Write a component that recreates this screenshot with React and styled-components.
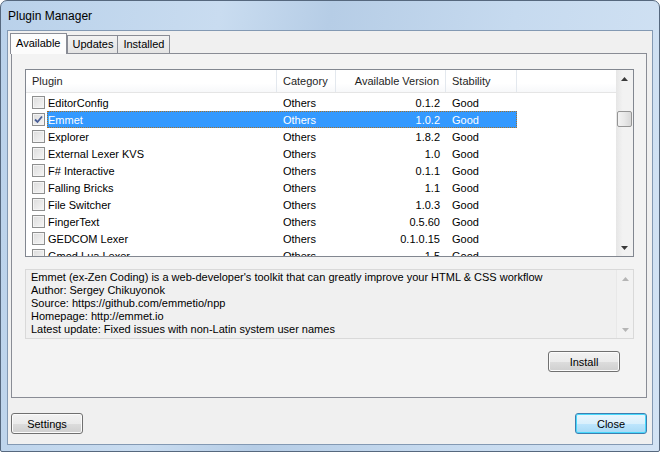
import React from 'react';
import styled, { createGlobalStyle, css } from 'styled-components';

const GlobalStyle = createGlobalStyle`
  html, body {
    margin: 0;
    padding: 0;
    width: 660px;
    height: 452px;
    overflow: hidden;
    background: #ffffff;
  }
  * {
    box-sizing: border-box;
  }
`;

const plugins = [
  { name: 'EditorConfig', version: '0.1.2' },
  { name: 'Emmet', version: '1.0.2', checked: true, selected: true },
  { name: 'Explorer', version: '1.8.2' },
  { name: 'External Lexer KVS', version: '1.0' },
  { name: 'F# Interactive', version: '0.1.1' },
  { name: 'Falling Bricks', version: '1.1' },
  { name: 'File Switcher', version: '1.0.3' },
  { name: 'FingerText', version: '0.5.60' },
  { name: 'GEDCOM Lexer', version: '0.1.0.15' },
  { name: 'Gmod Lua Lexer', version: '1.5' },
];

const description = [
  "Emmet (ex-Zen Coding) is a web-developer's toolkit that can greatly improve your HTML & CSS workflow",
  'Author: Sergey Chikuyonok',
  'Source: https://github.com/emmetio/npp',
  'Homepage: http://emmet.io',
  'Latest update: Fixed issues with non-Latin system user names',
];

const Arrow = ({ up, disabled }) => (
  <svg width="7" height="4" viewBox="0 0 7 4">
    <path
      d={up ? 'M0 4 L3.5 0 L7 4 Z' : 'M0 0 L3.5 4 L7 0 Z'}
      fill={disabled ? '#b5b5b5' : '#3a3a3a'}
    />
  </svg>
);

const CheckMark = () => (
  <svg width="9" height="9" viewBox="0 0 9 9">
    <path d="M1 4.5 L3.5 7 L8 1.5" fill="none" stroke="#4a5f97" strokeWidth="1.8" />
  </svg>
);

const App = () => {
  return (
    <>
      <GlobalStyle />
      <Window>
        <TitleBar>Plugin Manager</TitleBar>
        <Client>
          <TabStrip>
            <Tab active pad={6}>Available</Tab>
            <Tab pad={4}>Updates</Tab>
            <Tab pad={5}>Installed</Tab>
          </TabStrip>
          <TabPanel>
            <ListBox>
              <ListMain>
                <Header>
                  <HeaderCell>Plugin</HeaderCell>
                  <HeaderCell>Category</HeaderCell>
                  <HeaderCell right>Available Version</HeaderCell>
                  <HeaderCell>Stability</HeaderCell>
                  <HeaderCell />
                </Header>
                <Rows>
                  {plugins.map((p) => (
                    <Row key={p.name}>
                      <CheckCell>
                        <CheckBox>{p.checked && <CheckMark />}</CheckBox>
                      </CheckCell>
                      <Cells selected={p.selected}>
                        <Cell>{p.name}</Cell>
                        <Cell>Others</Cell>
                        <Cell right>{p.version}</Cell>
                        <Cell>Good</Cell>
                      </Cells>
                    </Row>
                  ))}
                </Rows>
              </ListMain>
              <ScrollBar>
                <ArrowBox>
                  <Arrow up />
                </ArrowBox>
                <Track>
                  <Thumb />
                </Track>
                <ArrowBox>
                  <Arrow />
                </ArrowBox>
              </ScrollBar>
            </ListBox>

            <DescBox>
              <DescText>
                {description.map((line) => (
                  <div key={line}>{line}</div>
                ))}
              </DescText>
              <DescScroll>
                <ArrowBox>
                  <Arrow up disabled />
                </ArrowBox>
                <ArrowBox>
                  <Arrow disabled />
                </ArrowBox>
              </DescScroll>
            </DescBox>

            <InstallRow>
              <Button>Install</Button>
            </InstallRow>
          </TabPanel>

          <BottomBar>
            <Button>Settings</Button>
            <Button primary>Close</Button>
          </BottomBar>
        </Client>
      </Window>
    </>
  );
};

export default App;

const Window = styled.div`
  width: 660px;
  height: 452px;
  display: flex;
  flex-direction: column;
  padding: 0 6px 6px 6px;
  border: 1px solid #56687e;
  border-radius: 7px 7px 2px 2px;
  background: linear-gradient(
    100deg,
    #b9d1ea 0%,
    #c9dcf0 30%,
    #b6cde6 45%,
    #c6daef 70%,
    #d3e3f4 100%
  );
  font-family: 'Liberation Sans', Arial, sans-serif;
  font-size: 11px;
  color: #000;
`;

const TitleBar = styled.div`
  height: 29px;
  display: flex;
  align-items: center;
  padding-left: 1px;
  padding-top: 1px;
  font-size: 12px;
  color: #000;
`;

const Client = styled.div`
  flex: 1;
  display: flex;
  flex-direction: column;
  background: #f0f0f0;
  border: 1px solid #8399b3;
  padding: 2px 5px 0 2px;
`;

const TabStrip = styled.div`
  display: flex;
  align-items: flex-end;
  height: 20px;
  flex-shrink: 0;
  position: relative;
  z-index: 1;
`;

const Tab = styled.div`
  height: 18px;
  padding: 0 ${(p) => p.pad}px 1px;
  display: flex;
  align-items: center;
  border: 1px solid #898c95;
  border-bottom: none;
  margin-left: -1px;
  background: linear-gradient(#f2f2f2, #e4e4e4);
  &:first-child {
    margin-left: 0;
  }
  ${(p) =>
    p.active &&
    css`
      height: 21px;
      padding: 0 ${p.pad}px 2px 5px;
      margin-bottom: -1px;
      background: #fcfcfc;
      margin-right: 1px;
    `}
`;

const TabPanel = styled.div`
  height: 345px;
  flex-shrink: 0;
  margin-left: 1px;
  border: 1px solid #898c95;
  background: #f3f3f3;
  padding: 15px 12px 0 13px;
  display: flex;
  flex-direction: column;
`;

const ListBox = styled.div`
  height: 188px;
  flex-shrink: 0;
  border: 1px solid #828790;
  background: #ffffff;
  display: flex;
  overflow: hidden;
`;

const ListMain = styled.div`
  flex: 1;
  display: flex;
  flex-direction: column;
  overflow: hidden;
`;

const Header = styled.div`
  display: grid;
  grid-template-columns: 251px 59px 110px 71px 1fr;
  height: 23px;
  flex-shrink: 0;
  border-bottom: 1px solid #e5e5e5;
  background: linear-gradient(#ffffff 0%, #ffffff 60%, #f7f8fa 100%);
`;

const HeaderCell = styled.div`
  display: flex;
  align-items: center;
  justify-content: ${(p) => (p.right ? 'flex-end' : 'flex-start')};
  padding: 0 6px;
  border-right: 1px solid #e3e8ee;
  color: #1e1e1e;
  &:last-child {
    border-right: none;
  }
`;

const Rows = styled.div`
  padding-top: 1px;
  flex-shrink: 0;
`;

const Row = styled.div`
  display: flex;
  height: 17px;
`;

const CheckCell = styled.div`
  width: 21px;
  display: flex;
  align-items: center;
  padding-left: 6px;
`;

const CheckBox = styled.div`
  width: 13px;
  height: 13px;
  border: 1px solid #8e8f8f;
  background: linear-gradient(135deg, #dcdcdc, #f6f6f6);
  box-shadow: inset 0 0 0 1px #f4f4f4;
  display: flex;
  align-items: center;
  justify-content: center;
`;

const Cells = styled.div`
  display: grid;
  grid-template-columns: 230px 59px 110px 71px;
  ${(p) =>
    p.selected &&
    css`
      background: #3399ff;
      color: #ffffff;
      outline: 1px dotted #a4712b;
      outline-offset: -1px;
    `}
`;

const Cell = styled.div`
  display: flex;
  align-items: center;
  justify-content: ${(p) => (p.right ? 'flex-end' : 'flex-start')};
  padding: 0 6px;
  white-space: nowrap;
  &:first-child {
    padding-left: 1px;
  }
`;

const ScrollBar = styled.div`
  width: 17px;
  display: flex;
  flex-direction: column;
  background: linear-gradient(90deg, #e6e6e6, #f2f2f2 40%, #f2f2f2);
`;

const ArrowBox = styled.div`
  height: 17px;
  display: flex;
  align-items: center;
  justify-content: center;
`;

const Track = styled.div`
  flex: 1;
  padding-top: 24px;
  display: flex;
  justify-content: center;
`;

const Thumb = styled.div`
  width: 15px;
  height: 16px;
  border: 1px solid #959595;
  border-radius: 2px;
  background: linear-gradient(90deg, #f3f3f3, #e8e8e8 50%, #d8d8d8);
`;

const DescBox = styled.div`
  margin-top: 12px;
  height: 70px;
  flex-shrink: 0;
  border: 1px solid #d9d9d9;
  background: #f0f0f0;
  display: flex;
`;

const DescText = styled.div`
  flex: 1;
  padding: 1px 5px;
  line-height: 13px;
  color: #000;
  white-space: nowrap;
`;

const DescScroll = styled.div`
  width: 17px;
  display: flex;
  flex-direction: column;
  justify-content: space-between;
  background: #f2f2f2;
  border-left: 1px solid #e8e8e8;
`;

const InstallRow = styled.div`
  display: flex;
  justify-content: flex-end;
  margin-top: 12px;
  padding-right: 14px;
`;

const Button = styled.button`
  width: 72px;
  height: 21px;
  padding: 0;
  border: 1px solid #707070;
  border-radius: 3px;
  font-family: 'Liberation Sans', Arial, sans-serif;
  font-size: 11px;
  color: #000;
  background: linear-gradient(#f2f2f2 0%, #ebebeb 50%, #dddddd 51%, #cfcfcf 100%);
  box-shadow: inset 0 0 0 1px #fbfbfb;
  ${(p) =>
    p.primary &&
    css`
      border-color: #3c7fb1;
      box-shadow: inset 0 0 0 1px #48d8fb;
      background: linear-gradient(#eaf6fd 0%, #d9f0fc 50%, #bee6fd 51%, #a7d9f5 100%);
    `}
`;

const BottomBar = styled.div`
  display: flex;
  justify-content: space-between;
  align-items: center;
  margin-top: 15px;
  padding-left: 1px;
`;
